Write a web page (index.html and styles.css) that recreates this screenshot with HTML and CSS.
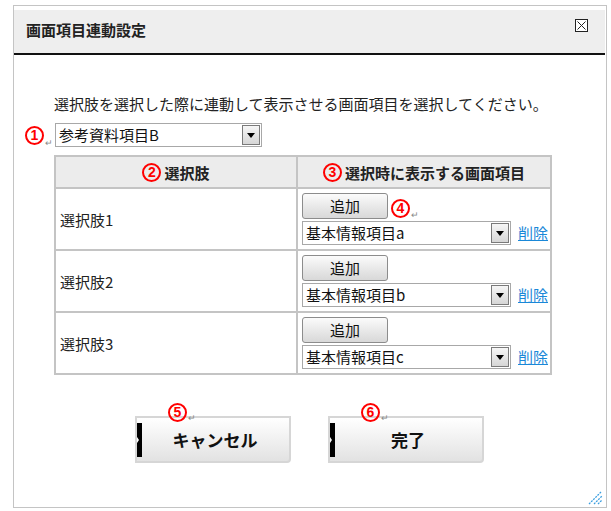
FILE: index.html
```html
<!DOCTYPE html>
<html lang="ja">
<head>
	<meta charset="UTF-8">
	<title>画面項目連動設定</title>
	<link rel="stylesheet" href="styles.css">
</head>
<body>
	<div class="dialog">
		<div class="dialog-header">
			<h1 class="dialog-title">画面項目連動設定</h1>
			<span class="close-btn">
				<svg width="13" height="13" viewBox="0 0 13 13">
					<rect x="0.5" y="0.5" width="12" height="12" fill="#fff" stroke="#222"/>
					<path d="M2.5 2.5 L10.5 10.5 M10.5 2.5 L2.5 10.5" stroke="#222" stroke-width="1"/>
				</svg>
			</span>
		</div>
		<div class="dialog-body">
			<p class="lead">選択肢を選択した際に連動して表示させる画面項目を選択してください。</p>
			<div class="source-row">
				<span class="mark">1</span><span class="ret">↵</span>
				<div class="dropdown wide">
					<span class="dropdown-text">参考資料項目B</span>
					<span class="dropdown-arrow"></span>
				</div>
			</div>
			<table class="link-table">
				<tr>
					<th class="col-choice"><span class="mark">2</span>選択肢</th>
					<th><span class="mark">3</span>選択時に表示する画面項目</th>
				</tr>
				<tr>
					<td class="label">選択肢1</td>
					<td class="items">
						<div class="add-row">
							<span class="add-btn">追加</span>
							<span class="mark small-gap">4</span><span class="ret">↵</span>
						</div>
						<div class="pick-row">
							<div class="dropdown item">
								<span class="dropdown-text">基本情報項目a</span>
								<span class="dropdown-arrow"></span>
							</div>
							<a class="del-link" href="#">削除</a>
						</div>
					</td>
				</tr>
				<tr>
					<td class="label">選択肢2</td>
					<td class="items">
						<div class="add-row">
							<span class="add-btn">追加</span>
						</div>
						<div class="pick-row">
							<div class="dropdown item">
								<span class="dropdown-text">基本情報項目b</span>
								<span class="dropdown-arrow"></span>
							</div>
							<a class="del-link" href="#">削除</a>
						</div>
					</td>
				</tr>
				<tr>
					<td class="label">選択肢3</td>
					<td class="items">
						<div class="add-row">
							<span class="add-btn">追加</span>
						</div>
						<div class="pick-row">
							<div class="dropdown item">
								<span class="dropdown-text">基本情報項目c</span>
								<span class="dropdown-arrow"></span>
							</div>
							<a class="del-link" href="#">削除</a>
						</div>
					</td>
				</tr>
			</table>
			<div class="actions">
				<div class="action-btn">
					<span class="btn-note"><span class="mark">5</span><span class="ret">↵</span></span>
					キャンセル
				</div>
				<div class="action-btn">
					<span class="btn-note"><span class="mark">6</span><span class="ret">↵</span></span>
					完了
				</div>
			</div>
		</div>
		<!-- リサイズ用つまみ -->
		<svg class="grip" width="15" height="14" viewBox="0 0 15 14">
			<path d="M1 13 L13 1 M6 13 L14 5 M10 13 L14 9" stroke="#3a9ee0" stroke-width="1.3" stroke-dasharray="2 1"/>
		</svg>
	</div>
</body>
</html>
```

FILE: styles.css
```css
* {
	margin: 0;
	padding: 0;
	box-sizing: border-box;
}
body {
	font-family: "Noto Sans CJK JP", "Liberation Sans", sans-serif;
	font-size: 15px;
	color: #222;
	background: #fff;
}
.dialog {
	position: relative;
	width: 594px;
	height: 503px;
	margin: 5px 0 0 13px;
	border: 1px solid #c4c4c4;
	padding: 4px 1px 0 0;
}
.dialog-header {
	display: flex;
	justify-content: space-between;
	align-items: flex-start;
	height: 45px;
	background: #eeeeee;
	border-bottom: 2px solid #111;
	padding: 10px 17px 0 12px;
}
.dialog-title {
	font-size: 15px;
	font-weight: bold;
	line-height: 20px;
	color: #222;
}
.close-btn {
	display: block;
	width: 13px;
	height: 13px;
	margin-top: -1px;
}
.close-btn svg {
	display: block;
}
.dialog-body {
	padding: 40px 0 0 40px;
}
.lead {
	font-size: 15px;
	line-height: 18px;
	white-space: nowrap;
}
.source-row {
	display: flex;
	align-items: center;
	margin: 10px 0 0 -29px;
}
/* 赤丸の番号 */
.mark {
	display: inline-block;
	width: 19px;
	height: 19px;
	border: 2px solid #f00;
	border-radius: 50%;
	color: #f00;
	font-family: "Liberation Sans", sans-serif;
	font-weight: bold;
	font-size: 14px;
	line-height: 15px;
	text-align: center;
	vertical-align: middle;
	flex-shrink: 0;
}
.ret {
	display: inline-block;
	width: 11px;
	font-size: 9px;
	line-height: 9px;
	color: #888;
	align-self: flex-end;
	padding-left: 1px;
}
.dropdown {
	display: flex;
	align-items: center;
	flex-shrink: 0;
	height: 24px;
	border: 1px solid #a8a8a8;
	background: #fff;
	padding: 1px 1px 1px 3px;
}
.dropdown.wide {
	width: 207px;
}
.dropdown.item {
	width: 209px;
}
.dropdown-text {
	flex: 1;
	font-size: 15px;
	line-height: 20px;
	color: #111;
}
.dropdown-arrow {
	position: relative;
	width: 18px;
	height: 20px;
	border: 1px solid #7a7a7a;
	background: linear-gradient(#f6f6f6, #d6d6d6);
}
.dropdown-arrow::after {
	content: "";
	position: absolute;
	left: 4px;
	top: 7px;
	border-top: 5px solid #000;
	border-left: 4px solid transparent;
	border-right: 4px solid transparent;
}
.link-table {
	width: 498px;
	margin-top: 8px;
	border-collapse: collapse;
	table-layout: fixed;
}
.link-table th, .link-table td {
	border: 2px solid #c4c4c4;
}
.link-table th {
	height: 32px;
	background: #ececec;
	font-size: 15px;
	font-weight: bold;
	text-align: center;
	color: #222;
	white-space: nowrap;
}
.link-table th .mark {
	margin-right: 3px;
	margin-top: -3px;
}
.col-choice {
	width: 242px;
}
.link-table td.label {
	padding-left: 4px;
	vertical-align: middle;
	font-size: 15px;
}
.link-table td.items {
	padding: 4px 0 4px 4px;
	white-space: nowrap;
}
.add-row {
	display: flex;
	align-items: center;
	height: 26px;
}
.add-btn {
	display: block;
	width: 86px;
	height: 26px;
	border: 1px solid #8c8c8c;
	border-radius: 3px;
	background: linear-gradient(#fbfbfb, #d8d8d8);
	font-size: 15px;
	line-height: 24px;
	text-align: center;
	color: #111;
}
.small-gap {
	margin-left: 3px;
	margin-top: 4px;
}
.pick-row {
	display: flex;
	align-items: center;
	margin-top: 2px;
}
.del-link {
	margin-left: 7px;
	color: #1a88d8;
	font-size: 15px;
	line-height: 20px;
	text-decoration: underline;
	white-space: nowrap;
}
.actions {
	display: flex;
	gap: 37px;
	margin: 41px 0 0 81px;
}
.action-btn {
	position: relative;
	display: flex;
	align-items: center;
	justify-content: center;
	width: 156px;
	height: 47px;
	border: 2px solid #d6d6d6;
	border-bottom-right-radius: 4px;
	background: linear-gradient(#ffffff, #e2e2e2);
	font-size: 17px;
	font-weight: bold;
	color: #111;
	padding-left: 4px;
}
.action-btn::before {
	content: "";
	position: absolute;
	left: 0;
	top: 5px;
	width: 5px;
	height: 34px;
	background: #000;
}
.action-btn::after {
	content: "";
	position: absolute;
	left: 0;
	top: 19px;
	border-left: 2px solid #fff;
	border-top: 3px solid transparent;
	border-bottom: 3px solid transparent;
}
.btn-note {
	position: absolute;
	left: 31px;
	top: -15px;
	display: flex;
	align-items: center;
	font-weight: normal;
}
.grip {
	position: absolute;
	right: 3px;
	bottom: 2px;
}
```
